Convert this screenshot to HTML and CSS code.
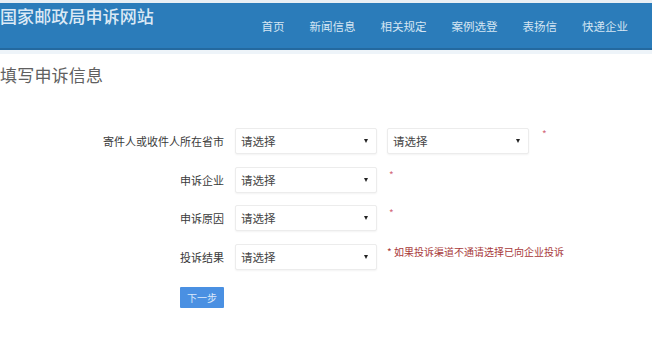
FILE: index.html
```html
<!DOCTYPE html>
<html lang="zh">
<head>
<meta charset="utf-8">
<link rel="stylesheet" href="styles.css">
</head>
<body>
<div class="topline"></div>
<header class="header">
  <div class="site-title">国家邮政局申诉网站</div>
  <nav class="nav">
    <a>首页</a>
    <a>新闻信息</a>
    <a>相关规定</a>
    <a>案例选登</a>
    <a>表扬信</a>
    <a>快递企业</a>
  </nav>
</header>
<div class="subline"></div>
<h1 class="page-title">填写申诉信息</h1>
<form class="form">
  <div class="label">寄件人或收件人所在省市</div>
  <div class="field">
    <div class="select"><span>请选择</span><span class="arrow"></span></div>
    <div class="select"><span>请选择</span><span class="arrow"></span></div>
    <span class="req req-high">*</span>
  </div>

  <div class="label">申诉企业</div>
  <div class="field">
    <div class="select"><span>请选择</span><span class="arrow"></span></div>
    <span class="req">*</span>
  </div>

  <div class="label">申诉原因</div>
  <div class="field">
    <div class="select"><span>请选择</span><span class="arrow"></span></div>
    <span class="req">*</span>
  </div>

  <div class="label">投诉结果</div>
  <div class="field">
    <div class="select"><span>请选择</span><span class="arrow"></span></div>
    <span class="note">* 如果投诉渠道不通请选择已向企业投诉</span>
  </div>

  <div class="btn-cell"><button type="button" class="btn">下一步</button></div>
</form>
</body>
</html>
```

FILE: styles.css
```css
* { box-sizing: border-box; }
html, body {
  margin: 0;
  padding: 0;
  background: #ffffff;
  font-family: "Noto Sans CJK SC", "Noto Sans", sans-serif;
}
.topline {
  height: 3px;
  background: #e9eff4;
}
.header {
  height: 47px;
  background: #2b7cba;
  border-bottom: 2px solid #24699f;
  display: flex;
  align-items: flex-start;
}
.site-title {
  color: #dbe9f5;
  font-size: 17px;
  line-height: 24px;
  margin-top: 1px;
  letter-spacing: 0.1px;
  font-weight: 500;
}
.nav {
  margin-left: auto;
  padding-right: 24px;
  display: flex;
  gap: 25px;
  margin-top: 15px;
}
.nav a {
  color: #d5e6f3;
  font-size: 11.5px;
  line-height: 16px;
}
.subline {
  height: 4px;
  background: #eef4f9;
}
.page-title {
  margin: 8px 0 0 0;
  font-size: 17px;
  line-height: 26px;
  font-weight: 400;
  color: #606060;
  letter-spacing: 0.2px;
}
.form {
  margin-top: 40px;
  display: grid;
  grid-template-columns: 224px 1fr;
  column-gap: 11px;
  row-gap: 12.5px;
  align-items: center;
}
.label {
  text-align: right;
  font-size: 11px;
  color: #3a3a3a;
  line-height: 26px;
}
.field {
  display: flex;
  align-items: center;
  gap: 10px;
}
.select {
  width: 142px;
  height: 26px;
  border: 1px solid #ececec;
  border-radius: 2px;
  box-shadow: 0 1px 2px rgba(0,0,0,0.05);
  display: flex;
  align-items: center;
  justify-content: space-between;
  padding: 0 8px 0 5px;
  font-size: 11.5px;
  color: #444;
  background: #fff;
}
.arrow {
  width: 0;
  height: 0;
  border-left: 2.5px solid transparent;
  border-right: 2.5px solid transparent;
  border-top: 4px solid #222;
}
.req {
  color: #d36a7a;
  font-size: 10px;
  align-self: flex-start;
  margin-left: 2px;
}
.req-high {
  margin-left: 3px;
  margin-top: -2px;
}
.note {
  color: #a83a3a;
  font-size: 10px;
  margin-top: -10px;
}
.btn-cell {
  grid-column: 1;
  display: flex;
  justify-content: flex-end;
  margin-top: 5px;
}
.btn {
  width: 44px;
  height: 21px;
  border: none;
  border-radius: 1px;
  background: #4a90e2;
  color: #dbe9fb;
  font-size: 10px;
  font-family: "Noto Sans CJK SC", sans-serif;
  padding: 0;
}
```
